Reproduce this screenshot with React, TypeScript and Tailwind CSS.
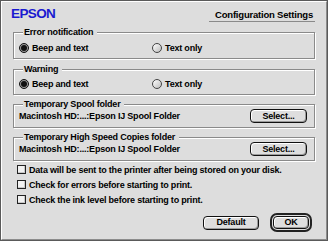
import React from 'react';

// Classic Mac OS "platinum" dialog: EPSON printer configuration settings

const FONT = "font-['Liberation_Sans',Arial,sans-serif]";

const Radio = ({ checked, label }: { checked?: boolean; label: string }) => (
  <div className="flex items-center gap-[3px] h-[12px]">
    {checked ? (
      <span className="flex items-center justify-center w-[10px] h-[10px] rounded-full border border-[#111] bg-[#9a9a9a]">
        <span className="w-[6px] h-[6px] rounded-full bg-[#111]" />
      </span>
    ) : (
      <span className="w-[10px] h-[10px] rounded-full border border-[#444] bg-gradient-to-br from-[#ffffff] to-[#bdbdbd]" />
    )}
    <span className="leading-[12px]">{label}</span>
  </div>
);

const Checkbox = ({ label }: { label: string }) => (
  <div className="flex items-center gap-[3px] h-[15px]">
    <span className="w-[9px] h-[9px] border border-[#222] bg-[#f2f2f2] shadow-[inset_-1px_-1px_0_#c8c8c8]" />
    <span className="leading-[12px] whitespace-nowrap">{label}</span>
  </div>
);

const Button = ({ label, className = '' }: { label: string; className?: string }) => (
  <div
    className={`flex items-center justify-center rounded-[4px] border border-[#111] bg-[#dedede] shadow-[inset_1px_1px_0_#fff,inset_-1px_-1px_0_#9c9c9c] leading-[11px] ${className}`}
  >
    {label}
  </div>
);

const GroupBox = ({ title, children, className = '' }: { title: string; children: React.ReactNode; className?: string }) => (
  <fieldset
    className={`border border-[#8a8a8a] shadow-[1px_1px_0_#fff,inset_1px_1px_0_#fff] px-[5px] ${className}`}
  >
    <legend className="ml-[4px] px-[1px] pr-[4px] leading-[12px] h-[12px] bg-[#dddddd]">{title}</legend>
    {children}
  </fieldset>
);

export default function App() {
  return (
    <div className={`w-[328px] h-[241px] bg-[#dddddd] border border-[#5a5a5a] text-[9px] tracking-[-0.2px] font-bold text-black ${FONT}`}>
      <div className="h-full border-t border-l border-white border-b border-r border-b-[#8c8c8c] border-r-[#8c8c8c] flex flex-col">
        {/* header */}
        <div className="h-[24px] flex items-start justify-between pl-[9px] pr-[11px] pt-[5px]">
          <span className="text-[13.5px] leading-[13px] tracking-[-0.6px] text-[#1a1ad0]">
            EPSON
          </span>
          <div className="mt-[2px] border-b border-[#8a8a8a] pl-[6px] pr-[2px] pb-[1px] text-[9.5px] leading-[11px]">
            Configuration Settings
          </div>
        </div>

        <div className="px-[11px] flex flex-col">
          <GroupBox title="Error notification" className="pt-[4px] pb-[4px]">
            <div className="flex">
              <div className="w-[133px]">
                <Radio checked label="Beep and text" />
              </div>
              <Radio label="Text only" />
            </div>
          </GroupBox>

          <GroupBox title="Warning" className="mt-[4px] pt-[3px] pb-[4px]">
            <div className="flex">
              <div className="w-[133px]">
                <Radio checked label="Beep and text" />
              </div>
              <Radio label="Text only" />
            </div>
          </GroupBox>

          <GroupBox title="Temporary Spool folder" className="mt-[3px] pb-[4px]">
            <div className="flex items-center justify-between -mt-[1px] pr-[2px]">
              <span className="leading-[12px]">Macintosh HD:...:Epson IJ Spool Folder</span>
              <Button label="Select..." className="w-[57px] h-[14px]" />
            </div>
          </GroupBox>

          <GroupBox title="Temporary High Speed Copies folder" className="mt-[3px] pb-[4px]">
            <div className="flex items-center justify-between -mt-[1px] pr-[2px]">
              <span className="leading-[12px]">Macintosh HD:...:Epson IJ Spool Folder</span>
              <Button label="Select..." className="w-[57px] h-[14px]" />
            </div>
          </GroupBox>

          <div className="mt-[1px] pl-[4px] flex flex-col">
            <Checkbox label="Data will be sent to the printer after being stored on your disk." />
            <Checkbox label="Check for errors before starting to print." />
            <Checkbox label="Check the ink level before starting to print." />
          </div>
        </div>

        <div className="mt-[6px] flex items-center justify-end gap-[11px] pr-[14px]">
          <Button label="Default" className="w-[56px] h-[14px]" />
          <div className="rounded-[7px] border-[2px] border-[#222] p-[1px]">
            <Button label="OK" className="w-[36px] h-[13px]" />
          </div>
        </div>
      </div>
    </div>
  );
}
